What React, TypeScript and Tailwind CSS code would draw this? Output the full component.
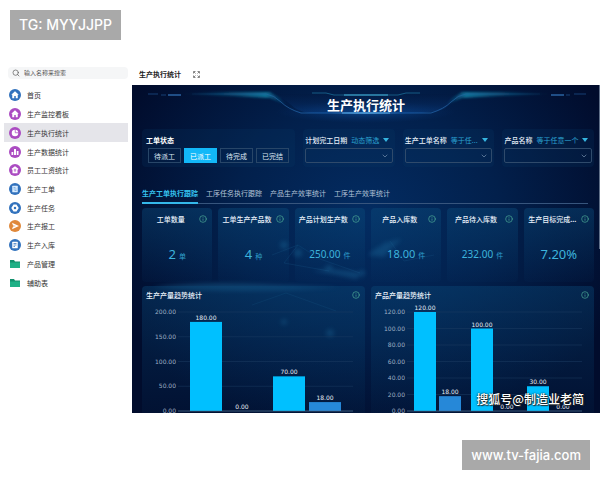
import React from 'react';
import { ChevronDown, Info, Search } from 'lucide-react';

interface MenuItem {
  label: string;
  icon: React.ReactNode;
  active?: boolean;
}

interface Kpi {
  title: string;
  value: string;
  unit?: string;
  size: string;
}

interface Bar {
  x: number;
  width: number;
  value: number;
  label: string;
  dim?: boolean;
}

interface ChartProps {
  title: string;
  ticks: number[];
  left: number;
  bars: Bar[];
}

const BLUE = '#3272bd';
const PURPLE = '#ab4cc2';
const ORANGE = '#e0883a';

const RoundIcon: React.FC<{ color: string; children: React.ReactNode }> = ({ color, children }) => (
  <svg viewBox="0 0 24 24" className="size-3 shrink-0" aria-hidden="true">
    <circle cx="12" cy="12" r="12" fill={color} />
    {children}
  </svg>
);

const HomeGlyph = () => (
  <path d="M12 4.5 4.5 11.5h2v7h4V14h3v4.5h4v-7h2z" fill="#fff" />
);

const FolderIcon = () => (
  <svg viewBox="0 0 24 24" className="size-3 shrink-0" aria-hidden="true">
    <path d="M2 4h8l2 3h10v3H2z" fill="#12906c" />
    <path d="M2 9h20v11H2z" fill="#1fb086" />
  </svg>
);

const menu: MenuItem[] = [
  { label: '首页', icon: <RoundIcon color={BLUE}><HomeGlyph /></RoundIcon> },
  { label: '生产监控看板', icon: <RoundIcon color={PURPLE}><HomeGlyph /></RoundIcon> },
  {
    label: '生产执行统计',
    active: true,
    icon: (
      <RoundIcon color={PURPLE}>
        <circle cx="12" cy="12" r="6.5" fill="#fff" />
        <path d="M12.5 5v6.5H19" fill="none" stroke={PURPLE} strokeWidth="1.5" />
      </RoundIcon>
    ),
  },
  {
    label: '生产数据统计',
    icon: (
      <RoundIcon color={PURPLE}>
        <path d="M5 12h3.5v6H5zM10 6h4v12h-4zM15.5 10H19v8h-3.5z" fill="#fff" />
      </RoundIcon>
    ),
  },
  {
    label: '员工工资统计',
    icon: (
      <RoundIcon color={PURPLE}>
        <path d="M12 4.5 19 9.5l-1.5 2H17v7H7v-7h-.5L5 9.5z" fill="#fff" />
        <path d="M12 9.5V16M9.5 12h5" stroke={PURPLE} strokeWidth="1.5" />
      </RoundIcon>
    ),
  },
  {
    label: '生产工单',
    icon: (
      <RoundIcon color={BLUE}>
        <rect x="6.5" y="5.5" width="11" height="13" rx="1" fill="#d9ecff" />
        <path d="M9 9h4M9 12h6M11 15h4" stroke="#6ba4dd" strokeWidth="1.5" />
      </RoundIcon>
    ),
  },
  {
    label: '生产任务',
    icon: (
      <RoundIcon color={BLUE}>
        <path d="M9 5h6l1.5 2.5 3 4.5-3 4.5L15 19H9l-1.5-2.5-3-4.5 3-4.5z" fill="#fff" />
        <circle cx="12" cy="12" r="2.5" fill={BLUE} />
      </RoundIcon>
    ),
  },
  {
    label: '生产报工',
    icon: (
      <RoundIcon color={ORANGE}>
        <path d="M6 5.5 20 12 6 18.500 8 13l6-1-6-1z" fill="#fff" />
      </RoundIcon>
    ),
  },
  {
    label: '生产入库',
    icon: (
      <RoundIcon color={BLUE}>
        <rect x="6.5" y="5.5" width="11" height="13" rx="1" fill="#fff" />
        <path d="M9 9h6M9 12h6M9 15h3" stroke={BLUE} strokeWidth="1.5" />
      </RoundIcon>
    ),
  },
  { label: '产品管理', icon: <FolderIcon /> },
  { label: '辅助表', icon: <FolderIcon /> },
];

const statuses = ['待派工', '已派工', '待完成', '已完结'];

const filters = [
  { label: '计划完工日期', mode: '动态筛选' },
  { label: '生产工单名称', mode: '等于任...' },
  { label: '产品名称', mode: '等于任意一个' },
];

const tabs = ['生产工单执行跟踪', '工序任务执行跟踪', '产品生产效率统计', '工序生产效率统计'];

const kpis: Kpi[] = [
  { title: '工单数量', value: '2', unit: '单', size: 'text-[13px]' },
  { title: '工单生产产品数', value: '4', unit: '种', size: 'text-[13px]' },
  { title: '产品计划生产数', value: '250.00', unit: '件', size: 'text-[10px]' },
  { title: '产品入库数', value: '18.00', unit: '件', size: 'text-[11px]' },
  { title: '产品待入库数', value: '232.00', unit: '件', size: 'text-[10px]' },
  { title: '生产目标完成...', value: '7.20%', size: 'text-[13px]' },
];

const outputBars: Bar[] = [
  { x: 48, width: 32, value: 180, label: '180.00' },
  { x: 84, width: 32, value: 0, label: '0.00', dim: true },
  { x: 131, width: 32, value: 70, label: '70.00' },
  { x: 167, width: 32, value: 18, label: '18.00', dim: true },
];

const productBars: Bar[] = [
  { x: 43, width: 22, value: 120, label: '120.00' },
  { x: 68, width: 22, value: 18, label: '18.00', dim: true },
  { x: 100, width: 22, value: 100, label: '100.00' },
  { x: 125, width: 22, value: 0, label: '0.00', dim: true },
  { x: 156, width: 22, value: 30, label: '30.00' },
  { x: 181, width: 22, value: 0, label: '0.00', dim: true },
];

const InfoIcon = () => <Info className="size-2 shrink-0 text-[#4fae98]" strokeWidth={2} aria-hidden="true" />;

const Sidebar = () => (
  <aside className="w-[132px] shrink-0 pr-1 pl-1">
    <label className="ml-1 flex h-3 items-center gap-1 rounded-sm bg-[#f5f6f7] pl-1">
      <Search className="size-2 shrink-0 text-[#555]" aria-hidden="true" />
      <input
        type="search"
        aria-label="搜索"
        placeholder="输入名称来搜索"
        className="w-full min-w-0 bg-transparent text-[6px] leading-3 outline-none placeholder:text-[#555]"
      />
    </label>
    <nav className="mt-[7px] grid h-[206px] auto-rows-fr">
      {menu.map((item) => (
        <a
          key={item.label}
          href="#"
          className={
            item.active
              ? 'flex items-center gap-[6px] bg-[#e5e5ea] pl-[5px] text-[#333]'
              : 'flex items-center gap-[6px] pl-[5px] text-[#333]'
          }
        >
          {item.icon}
          <span>{item.label}</span>
        </a>
      ))}
    </nav>
  </aside>
);

const Banner = () => (
  <div className="relative flex h-11 justify-center">
    <svg viewBox="0 0 468 44" className="absolute inset-x-0 top-0 w-full" aria-hidden="true">
      <defs>
        <linearGradient id="wing" x1="0" x2="1">
          <stop offset="0" stopColor="#0c5c8c" stopOpacity="0" />
          <stop offset="0.8" stopColor="#1487ab" stopOpacity="0.8" />
          <stop offset="1" stopColor="#0a4f86" stopOpacity="0" />
        </linearGradient>
        <linearGradient id="edge" x1="0" x2="1">
          <stop offset="0" stopColor="#14507f" stopOpacity="0.3" />
          <stop offset="0.25" stopColor="#2a6aa8" stopOpacity="0.8" />
          <stop offset="0.4" stopColor="#1b66b8" />
          <stop offset="0.5" stopColor="#6cc4ff" />
          <stop offset="0.6" stopColor="#1b66b8" />
          <stop offset="0.75" stopColor="#2a6aa8" stopOpacity="0.8" />
          <stop offset="1" stopColor="#14507f" stopOpacity="0.3" />
        </linearGradient>
        <radialGradient id="halo">
          <stop offset="0" stopColor="#1266c0" stopOpacity="0.5" />
          <stop offset="1" stopColor="#0a3a80" stopOpacity="0" />
        </radialGradient>
        <linearGradient id="plate" x1="0" x2="0" y1="0" y2="1">
          <stop offset="0" stopColor="#03183f" stopOpacity="0.3" />
          <stop offset="1" stopColor="#0a3c80" stopOpacity="0.5" />
        </linearGradient>
        <filter id="wingBlur" x="-10%" y="-50%" width="120%" height="200%">
          <feGaussianBlur stdDeviation="1" />
        </filter>
      </defs>
      <ellipse cx="234" cy="27" rx="90" ry="11" fill="url(#halo)" />
      <path d="M134 9h200q-9 2-16 10t-22 8l-6 1H178q-12-1-20-9T134 9z" fill="url(#plate)" />
      <g filter="url(#wingBlur)">
        <path d="M46 9 100 7h38l10 6 8 8-18-8-36-2z" fill="url(#wing)" />
        <path d="M46 9 100 7h38l10 6 8 8-18-8-36-2z" fill="url(#wing)" transform="matrix(-1 0 0 1 468 0)" />
      </g>
      <path
        d="M60 9h74q8 1 15 8t20 11h130q13-4 20-11t15-8h74"
        fill="none"
        stroke="url(#edge)"
        strokeWidth="0.8"
      />
      <path d="M180 8h14l8 2h64l8-2h14" fill="none" stroke="#2080a8" strokeWidth="0.8" opacity="0.8" />
      <path d="M212 10h44" stroke="#45b0d8" strokeWidth="1" />
      <path d="M210 28h48" stroke="#6cc4ff" strokeWidth="1" opacity="0.7" />
      <path d="M36 10h13M419 10h13" stroke="#3f8bd8" strokeWidth="1" />
      <path d="M16 9h10M29 10h5M434 10h4M442 9h12" stroke="#1d4c86" strokeWidth="0.8" />
    </svg>
    <h1 className="relative mt-[10px] text-[13px] leading-5 font-bold text-white">生产执行统计</h1>
  </div>
);

const FilterRow = () => (
  <div className="flex gap-2">
    <div
      role="group"
      aria-labelledby="status-label"
      className="min-w-0 flex-[155] rounded-sm bg-[#0a3a68]/20 pt-[6px] pb-1 pl-1"
    >
      <div id="status-label" className="font-bold text-white">工单状态</div>
      <div className="mt-[3px] ml-[2px] flex gap-[3px]">
        {statuses.map((status) => (
          <button
            key={status}
            type="button"
            className={
              status === '已派工'
                ? 'h-[15px] w-[33px] border border-[#12b8f8] bg-[#12b8f8] text-white'
                : 'h-[15px] w-[33px] border border-[#284668] text-[#dbe6f2]'
            }
          >
            {status}
          </button>
        ))}
      </div>
    </div>
    {filters.map((filter, index) => (
      <div key={filter.label} className="min-w-0 flex-[91] rounded-sm bg-[#0a3a68]/20 px-[2px] pt-[6px] pb-1">
        <div className="flex items-center gap-1 whitespace-nowrap">
          <label htmlFor={`filter-${index}`} className="font-medium text-[#e6eef8]">
            {filter.label}
          </label>
          <button type="button" className="flex flex-1 items-center justify-between pr-1 text-[#2ba3d2]">
            {filter.mode}
            <svg viewBox="0 0 6 4" className="w-[6px]" aria-hidden="true">
              <path d="M0 0h6L3 4z" fill="#35b5e0" />
            </svg>
          </button>
        </div>
        <div className="relative mt-[3px]">
          <select
            id={`filter-${index}`}
            className="block h-[15px] w-full appearance-none rounded-xs border border-[#2f4a6b] bg-transparent"
          />
          <ChevronDown className="pointer-events-none absolute top-1 right-1 size-2 text-[#7f98b5]" aria-hidden="true" />
        </div>
      </div>
    ))}
  </div>
);

const TabBar = () => (
  <div role="tablist" className="mt-[21px] mr-[6px] flex gap-2 border-b border-[#37557d]">
    {tabs.map((tab, index) => (
      <button
        key={tab}
        type="button"
        role="tab"
        aria-selected={index === 0}
        className={
          index === 0
            ? '-mb-px border-b-2 border-[#35b8ea] pb-1 font-bold text-[#35c2ee]'
            : 'pb-[5px] text-[#b4c4d8]'
        }
      >
        {tab}
      </button>
    ))}
  </div>
);

const KpiCard: React.FC<Kpi> = ({ title, value, unit, size }) => (
  <div className="h-[74px] min-w-0 rounded-sm bg-linear-to-b from-[#0a4a7a]/45 to-[#063464]/10">
    <div className="flex items-center pt-[6px] pr-[5px]">
      <h2 className="flex-1 text-center font-medium whitespace-nowrap text-[#eaf2fb]">{title}</h2>
      <InfoIcon />
    </div>
    <div className="mt-5 flex items-baseline justify-center gap-[3px] leading-5 text-[#3db4dc]">
      <span className={`${size} font-['Noto_Sans',sans-serif]`}>{value}</span>
      {unit && <span className="text-[#2f9fca]">{unit}</span>}
    </div>
  </div>
);

const BarChart: React.FC<ChartProps> = ({ title, ticks, left, bars }) => {
  const max = ticks[0];
  const top = 12;
  const height = 99;
  const yOf = (value: number) => top + height - (value / max) * height;

  return (
    <section className="min-w-0 rounded-t-sm bg-linear-to-b from-[#0a4a7a]/40 to-[#04284e]/20">
      <div className="flex items-center justify-between pt-1 pr-[5px] pl-1">
        <h2 className="font-medium text-[#eaf2fb]">{title}</h2>
        <InfoIcon />
      </div>
      <svg
        viewBox="0 0 223 113"
        className="block w-full font-['DejaVu_Sans',sans-serif] text-[6px]"
        role="img"
        aria-label={title}
      >
        {ticks.map((tick) => (
          <g key={tick}>
            <path d={`M${left + 2} ${yOf(tick)}H211`} stroke="#1c3d63" strokeWidth="0.5" />
            <text x={left} y={yOf(tick) + 2} textAnchor="end" fill="#9fb0c4">
              {tick.toFixed(2)}
            </text>
          </g>
        ))}
        {bars.map((bar) => (
          <g key={bar.x}>
            <rect
              x={bar.x}
              y={yOf(bar.value)}
              width={bar.width}
              height={yOf(0) - yOf(bar.value)}
              fill={bar.dim ? '#2688d8' : '#00c0ff'}
            />
            <text x={bar.x + bar.width / 2} y={yOf(bar.value) - 2} textAnchor="middle" fill="#e8eef5">
              {bar.label}
            </text>
          </g>
        ))}
        <path d={`M${left + 2} ${yOf(0)}H211`} stroke="#54708e" strokeWidth="0.6" />
      </svg>
    </section>
  );
};

const Dashboard = () => (
  <div className="relative bg-[#010c2c] bg-[radial-gradient(ellipse_at_50%_40%,#032c62_0%,#02204c_40%,#010c2c_82%)]">
    <svg viewBox="0 0 468 328" className="absolute inset-0 size-full" aria-hidden="true">
      <defs>
        <filter id="soft" x="-20%" y="-20%" width="140%" height="140%">
          <feGaussianBlur stdDeviation="2" />
        </filter>
      </defs>
      <g fill="#2c8dc0" opacity="0.28" filter="url(#soft)">
        <circle cx="152" cy="160" r="4" />
        <circle cx="166" cy="168" r="4" />
        <circle cx="197" cy="184" r="4" />
        <circle cx="152" cy="237" r="3" />
        <circle cx="198" cy="248" r="4" />
        <circle cx="254" cy="160" r="3" />
        <circle cx="230" cy="188" r="3" />
        <path d="M20 202q50-6 110-3t80 3q-50 4-100 4t-90-4z" />
        <path d="M180 186q20-4 50 2l-6 6q-24-6-44-8z" />
        <path d="M236 170q14-14 34-16-12 10-18 18z" />
      </g>
      <path
        d="M140 170l26-10 22 14 40 14M166 160l-14 18 45 8M120 220l34-12 50 18M258 156l14 20 30-6"
        stroke="#3a9ac8"
        strokeWidth="0.5"
        opacity="0.25"
        fill="none"
      />
    </svg>
    <div className="relative">
      <Banner />
      <div className="pr-[6px] pl-[10px]">
        <FilterRow />
        <TabBar />
        <div className="mt-1 grid grid-cols-6 gap-[6px]">
          {kpis.map((kpi) => (
            <KpiCard key={kpi.title} {...kpi} />
          ))}
        </div>
        <div className="mt-1 grid grid-cols-2 gap-[6px]">
          <BarChart title="生产产量趋势统计" ticks={[200, 150, 100, 50, 0]} left={34} bars={outputBars} />
          <BarChart title="产品产量趋势统计" ticks={[120, 100, 80, 60, 40, 20, 0]} left={34} bars={productBars} />
        </div>
      </div>
    </div>
    <div className="absolute top-0 right-0 h-1/2 w-px bg-[#5f6f88]" />
    <p className="absolute right-4 bottom-2 text-[12px] leading-3 font-medium text-white [text-shadow:0_0_2px_#000,1px_1px_1px_#333]">
      搜狐号@制造业老简
    </p>
  </div>
);

const App: React.FC = () => {
  return (
    <div className="flex flex-col bg-white font-['Noto_Sans_CJK_SC',sans-serif] text-[7px] leading-[10px]">
      <div className="m-[10px] self-start bg-[#a9a9a9] px-[9px] font-['Inter',sans-serif] text-[14px] leading-[30px] font-medium text-white">
        TG: MYYJJPP
      </div>
      <div className="mt-[17px] flex">
        <Sidebar />
        <main className="min-w-0 flex-1">
          <header className="flex h-[18px] items-center gap-3 pb-1 pl-[7px]">
            <span className="font-bold text-[#222]">生产执行统计</span>
            <button type="button" aria-label="全屏">
              <svg viewBox="0 0 14 14" className="size-[7px]" aria-hidden="true">
                <path
                  d="M1 5V1h4M9 1h4v4M13 9v4H9M5 13H1V9M2 2l3 3M12 2 9 5M12 12 9 9M2 12l3-3"
                  fill="none"
                  stroke="#444"
                  strokeWidth="1.3"
                />
              </svg>
            </button>
          </header>
          <Dashboard />
        </main>
      </div>
      <div className="mx-[10px] mt-[27px] mb-[10px] self-end bg-[#a9a9a9] px-[9px] font-['Inter',sans-serif] text-[13px] leading-[30px] font-medium text-white">
        www.tv-fajia.com
      </div>
    </div>
  );
};

export default App;
